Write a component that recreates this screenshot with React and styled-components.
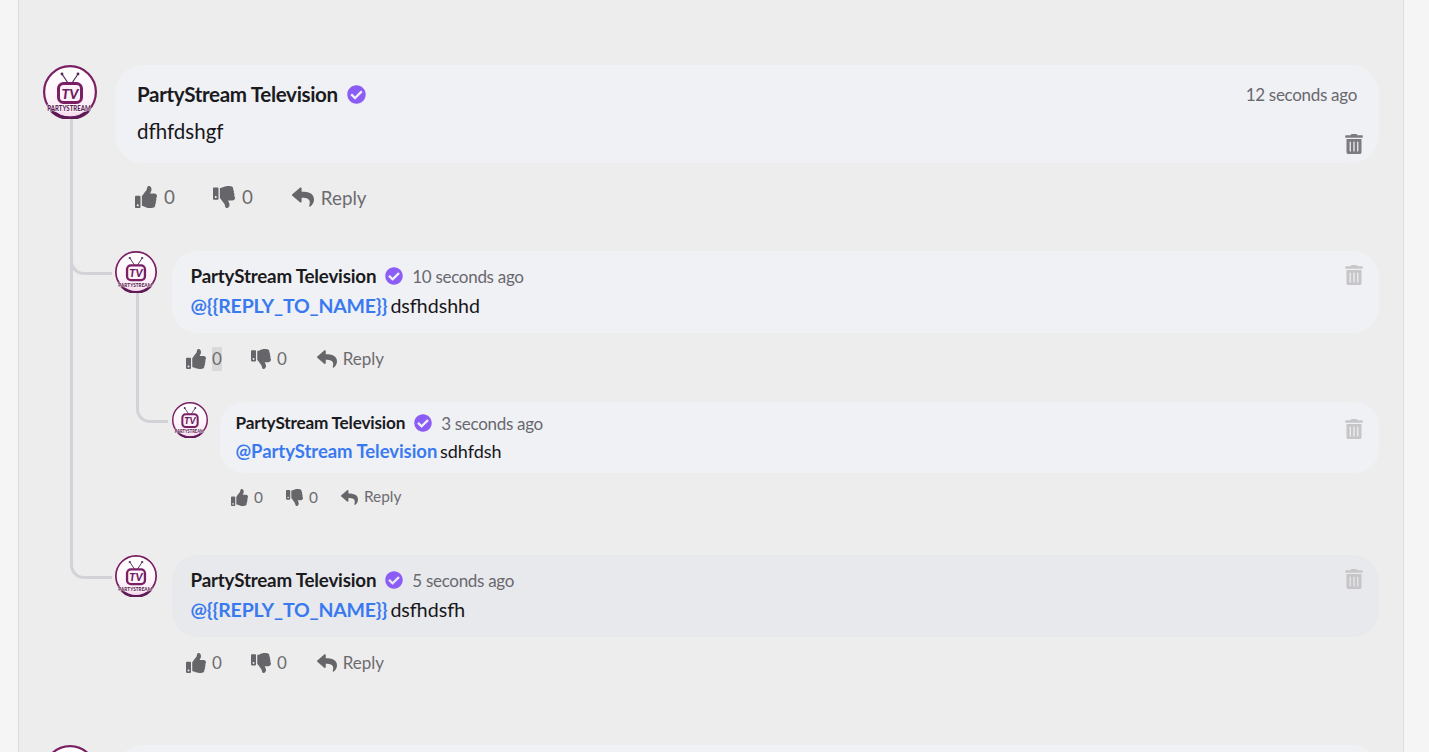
import React from 'react';
import styled, { createGlobalStyle } from 'styled-components';
import { FaThumbsUp, FaThumbsDown, FaReply, FaTrashAlt, FaCheckCircle } from 'react-icons/fa';

const Global = createGlobalStyle`
  html, body { margin: 0; padding: 0; height: 752px; overflow: hidden; background: #f5f5f5; }
  body { font-family: Lato, "Open Sans", sans-serif; color: #1c1c1f; }
`;

const SIZES = {
  root: { avatar: 54, gap: 18, name: 20.6, nameLs: -0.35, time: 17, body: 20.5, mention: 20.5, mentionLs: 0, radius: 28, padX: 22, padTop: 16, padBottom: 15, bodyTop: 11, act: 18.8, icon: 22, actGap: 38, actLeft: 20, actH: 68, badge: 19, replyShift: 1, replyLift: 0 },
  reply: { avatar: 42, gap: 15, name: 18.8, nameLs: -0.2, time: 17, body: 19.6, mention: 19.5, mentionLs: -0.2, radius: 26, padX: 18.5, padTop: 13, padBottom: 12, bodyTop: 6, act: 17, icon: 20, actGap: 29, actLeft: 14, actH: 52, badge: 18, replyShift: 1, replyLift: 2 },
  nested: { avatar: 36, gap: 12, name: 17.2, nameLs: -0.2, time: 17, body: 18, mention: 18.5, mentionLs: -0.05, radius: 24, padX: 15.5, padTop: 10, padBottom: 9, bodyTop: 6, act: 15.4, icon: 17, actGap: 23, actLeft: 11, actH: 48, badge: 18, replyShift: 0, replyLift: 2 },
};

const Page = styled.div`
  width: 1429px;
  height: 752px;
  overflow: hidden;
  background: #f5f5f5;
`;
const Panel = styled.main`
  box-sizing: border-box;
  width: 1386px;
  height: 752px;
  margin-left: 18px;
  padding: 65px 24px 0;
  background: #ededed;
  border-left: 1px solid #dcdcdc;
  border-right: 1px solid #dcdcdc;
`;
const Row = styled.article`
  position: relative;
  display: flex;
  align-items: flex-start;
  gap: ${p => SIZES[p.$k].gap}px;
`;
const Main = styled.div`
  flex: 1;
  min-width: 0;
`;
const Bubble = styled.div`
  position: relative;
  height: ${p => p.$h}px;
  box-sizing: border-box;
  background: ${p => (p.$hover ? '#e8e9ed' : '#f0f1f5')};
  border-radius: ${p => SIZES[p.$k].radius}px;
  padding: ${p => SIZES[p.$k].padTop}px ${p => SIZES[p.$k].padX}px ${p => SIZES[p.$k].padBottom}px;
`;
const Head = styled.header`
  display: flex;
  align-items: center;
  gap: 9px;
`;
const Name = styled.span`
  font-size: ${p => SIZES[p.$k].name}px;
  font-weight: 700;
  line-height: 1.3;
  color: #1b1b1e;
  letter-spacing: ${p => SIZES[p.$k].nameLs}px;
`;
const Badge = styled(FaCheckCircle)`
  color: #8b5cf6;
  font-size: ${p => SIZES[p.$k].badge}px;
  flex: none;
`;
const Time = styled.time`
  font-size: ${p => SIZES[p.$k].time}px;
  color: #68686e;
  letter-spacing: -0.3px;
  margin-left: ${p => (p.$k === 'root' ? 'auto' : '0')};
`;
const Body = styled.p`
  margin: ${p => SIZES[p.$k].bodyTop}px 0 0;
  font-size: ${p => SIZES[p.$k].body}px;
  line-height: 1.25;
  color: #17171a;
`;
const Mention = styled.span`
  color: #3a7af0;
  font-weight: 700;
  font-size: ${p => SIZES[p.$k].mention}px;
  letter-spacing: ${p => SIZES[p.$k].mentionLs}px;
  margin-right: -2px;
`;
const Trash = styled(FaTrashAlt)`
  position: absolute;
  right: 15px;
  top: ${p => p.$top}px;
  font-size: 20px;
  color: ${p => (p.$dim ? '#c6c6c8' : '#7c7c80')};
`;
const Actions = styled.div`
  display: flex;
  align-items: center;
  height: ${p => SIZES[p.$k].actH}px;
  padding-left: ${p => SIZES[p.$k].actLeft}px;
  gap: ${p => SIZES[p.$k].actGap}px;
  font-size: ${p => SIZES[p.$k].act}px;
  color: #6c6c70;
`;
const Action = styled.span`
  display: inline-flex;
  align-items: center;
  gap: ${p => (p.$k === 'root' ? 7 : 6)}px;
  svg { font-size: ${p => SIZES[p.$k].icon}px; color: #66666a; }
`;
const ReplyAction = styled(Action)`
  margin-left: ${p => SIZES[p.$k].replyShift}px;
`;
const ReplyLabel = styled.span`
  margin-top: -${p => SIZES[p.$k].replyLift}px;
`;
const Count = styled.span`
  background: ${p => (p.$sel ? '#d9d9d9' : 'transparent')};
  line-height: 24px;
`;
const Replies = styled.section`
  display: flex;
  flex-direction: column;
  gap: 34px;
  margin-top: 20px;
`;
const NestedReplies = styled.section`
  margin-top: 17px;
`;
const Elbow = styled.span`
  position: absolute;
  left: ${p => p.$left}px;
  top: ${p => p.$top}px;
  width: ${p => p.$w}px;
  height: ${p => p.$h}px;
  box-sizing: border-box;
  border-left: 3px solid #d1d3d9;
  border-bottom: 3px solid #d1d3d9;
  border-bottom-left-radius: 14px;
`;
const NextRoot = styled.div`
  margin-top: 56px;
`;
const AvatarWrap = styled.svg`
  flex: none;
  display: block;
`;
const LogoName = styled.text`
  font-family: Lato, sans-serif;
  font-weight: 900;
  font-size: 8px;
  fill: #5f1f56;
  stroke: #ffffff;
  stroke-width: 0.8px;
  paint-order: stroke;
`;
const LogoTv = styled.text`
  font-family: Lato, sans-serif;
  font-style: italic;
  font-weight: 900;
  font-size: 14px;
  fill: #6d1d5f;
`;

function Avatar({ size }) {
  const id = `av${size}`;
  return (
    <AvatarWrap width={size} height={size} viewBox="0 0 54 54" aria-label="PartyStream">
      <defs>
        <linearGradient id={id} x1="0" y1="0" x2="0" y2="1">
          <stop offset="0" stopColor="#ffffff" />
          <stop offset="0.65" stopColor="#fdf3fa" />
          <stop offset="1" stopColor="#f5d9ec" />
        </linearGradient>
      </defs>
      <circle cx="27" cy="27" r="25.9" fill={`url(#${id})`} stroke="#7a1f63" strokeWidth="2.2" />
      <path d="M8 45a26 26 0 0 0 38 0" fill="none" stroke="#5f1a57" strokeWidth="3.4" />
      <path d="M25 18 19 9M29 18 35 9" stroke="#4b2f55" strokeWidth="1.2" />
      <circle cx="19" cy="9" r="1.4" fill="#4b2f55" />
      <circle cx="35" cy="9" r="1.4" fill="#4b2f55" />
      <rect x="15.5" y="18.5" width="23" height="19" rx="5" fill="#fdf2fa" stroke="#7a1f63" strokeWidth="3" />
      <LogoTv x="27" y="33.5" textAnchor="middle">TV</LogoTv>
      <LogoName transform="translate(26 46) scale(0.76 1)" textAnchor="middle">PARTYSTREAM</LogoName>
    </AvatarWrap>
  );
}

function ActionBar({ k, sel }) {
  return (
    <Actions $k={k}>
      <Action $k={k}><FaThumbsUp /><Count $sel={sel}>0</Count></Action>
      <Action $k={k}><FaThumbsDown /><Count>0</Count></Action>
      <ReplyAction $k={k}><FaReply /><ReplyLabel $k={k}>Reply</ReplyLabel></ReplyAction>
    </Actions>
  );
}

const Comment = ({ k, h, time, hover, trashTop, mention, text, sel, elbow, children }) => (
  <Row $k={k}>
    {elbow}
    <Avatar size={SIZES[k].avatar} />
    <Main>
      <Bubble $k={k} $h={h} $hover={hover}>
        <Head $k={k}>
          <Name $k={k}>PartyStream Television</Name>
          <Badge $k={k} />
          <Time $k={k}>{time}</Time>
        </Head>
        <Body $k={k}>
          {mention && <Mention $k={k}>{mention}</Mention>}{mention ? ' ' : ''}{text}
        </Body>
        <Trash $top={trashTop} $dim={k !== 'root'} />
      </Bubble>
      <ActionBar k={k} sel={sel} />
      {children}
    </Main>
  </Row>
);

export default function App() {
  return (
    <Page>
      <Global />
      <Panel>
        <Comment k="root" h={98} time="12 seconds ago" trashTop={69} text="dfhfdshgf">
          <Replies>
            <Comment k="reply" h={82} time="10 seconds ago" trashTop={14} mention="@{{REPLY_TO_NAME}}" text="dsfhdshhd" sel
              elbow={<Elbow $left={-45} $top={-132} $w={42} $h={156} />}>
              <NestedReplies>
                <Comment k="nested" h={71} time="3 seconds ago" trashTop={17} mention="@PartyStream Television" text="sdhfdsh"
                  elbow={<Elbow $left={-36} $top={-109} $w={32} $h={130} />} />
              </NestedReplies>
            </Comment>
            <Comment k="reply" h={82} hover time="5 seconds ago" trashTop={14} mention="@{{REPLY_TO_NAME}}" text="dsfhdsfh"
              elbow={<Elbow $left={-45} $top={-436} $w={42} $h={460} />} />
          </Replies>
        </Comment>
        <NextRoot>
          <Row $k="root">
            <Avatar size={54} />
            <Main><Bubble $k="root" $h={98} /></Main>
          </Row>
        </NextRoot>
      </Panel>
    </Page>
  );
}
